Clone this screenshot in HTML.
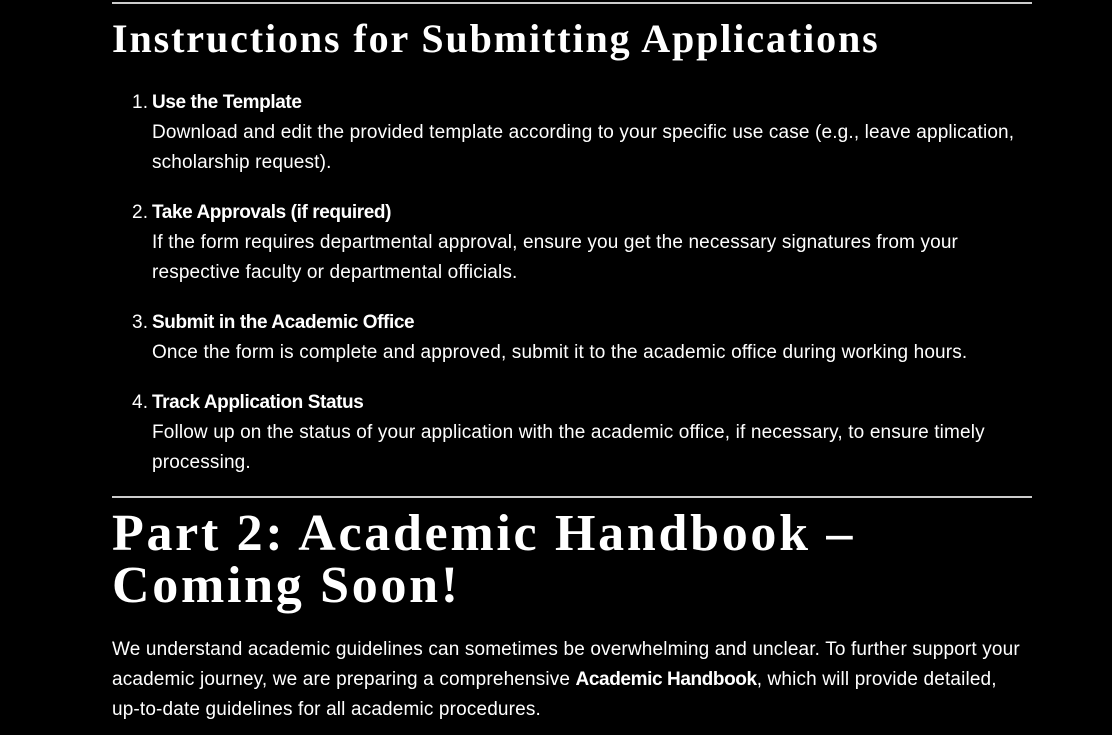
<!DOCTYPE html>
<html><head><meta charset="utf-8"><style>
html,body{margin:0;background:#000;width:1112px;height:735px;overflow:hidden}
body{position:relative;color:#fff;font-family:"Liberation Sans",sans-serif}
.hr{position:absolute;left:112px;width:920px;height:2px;background:#ccc}
.l{position:absolute;white-space:nowrap;font-size:19px;line-height:30px;letter-spacing:0.15px}
.b{font-weight:bold}
.h{position:absolute;left:112px;white-space:nowrap;font-family:"Liberation Serif",serif;font-weight:bold}
</style></head><body>
<div class="hr" style="top:2px"></div>
<div class="h" style="top:16px;font-size:40px;line-height:46px;letter-spacing:1.9px">Instructions for Submitting Applications</div>

<div class="l" style="left:132px;top:88px">1.</div>
<div class="l b" style="left:152px;top:88px;letter-spacing:-0.4px">Use the Template</div>
<div class="l" style="left:152px;top:118px">Download and edit the provided template according to your specific use case (e.g., leave application,</div>
<div class="l" style="left:152px;top:148px">scholarship request).</div>

<div class="l" style="left:132px;top:198px">2.</div>
<div class="l b" style="left:152px;top:198px;letter-spacing:-0.4px">Take Approvals (if required)</div>
<div class="l" style="left:152px;top:228px">If the form requires departmental approval, ensure you get the necessary signatures from your</div>
<div class="l" style="left:152px;top:258px">respective faculty or departmental officials.</div>

<div class="l" style="left:132px;top:308px">3.</div>
<div class="l b" style="left:152px;top:308px;letter-spacing:-0.4px">Submit in the Academic Office</div>
<div class="l" style="left:152px;top:338px">Once the form is complete and approved, submit it to the academic office during working hours.</div>

<div class="l" style="left:132px;top:388px">4.</div>
<div class="l b" style="left:152px;top:388px;letter-spacing:-0.4px">Track Application Status</div>
<div class="l" style="left:152px;top:418px">Follow up on the status of your application with the academic office, if necessary, to ensure timely</div>
<div class="l" style="left:152px;top:448px">processing.</div>

<div class="hr" style="top:496px"></div>
<div class="h" style="top:508px;font-size:52px;line-height:52px;letter-spacing:2.7px">Part 2: Academic Handbook –</div>
<div class="h" style="top:560px;font-size:52px;line-height:52px;letter-spacing:2.7px">Coming Soon!</div>

<div class="l" style="left:112px;top:635px">We understand academic guidelines can sometimes be overwhelming and unclear. To further support your</div>
<div class="l" style="left:112px;top:665px">academic journey, we are preparing a comprehensive <b style="letter-spacing:-0.4px">Academic Handbook</b>, which will provide detailed,</div>
<div class="l" style="left:112px;top:695px">up-to-date guidelines for all academic procedures.</div>
</body></html>
